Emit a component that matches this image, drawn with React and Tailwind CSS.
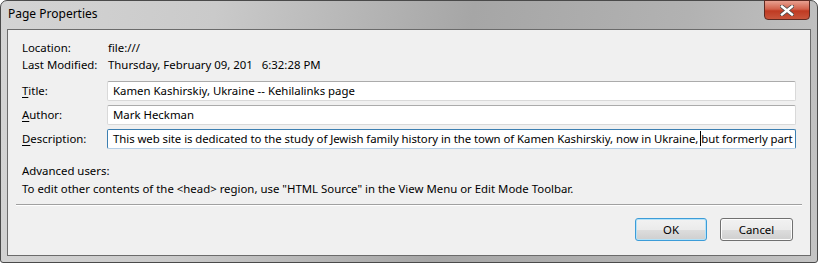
const font = { fontFamily: '"Noto Sans", "Open Sans", sans-serif' };

const Field = ({ underline, rest, value, focused }) => (
  <div className="flex items-center h-[20px]">
    <div className="w-[85px] shrink-0">
      <span className="underline underline-offset-2">{underline}</span>
      {rest}
    </div>
    <div
      className={
        "flex-1 h-[20px] bg-white flex items-center px-[5px] overflow-hidden whitespace-nowrap rounded-[2px] border " +
        (focused
          ? "border-[#3c7fb1] border-b-[#b5cfe7] tracking-[-0.06px]"
          : "border-[#d9d9d9] border-t-[#ababab]")
      }
    >
      <span>{value}</span>
    </div>
  </div>
);

export default function App() {
  return (
    <div
      className="w-[818px] h-[263px] bg-white text-[11.4px] text-black leading-[16px]"
      style={font}
    >
      <div className="relative w-full h-full flex flex-col rounded-t-[7px] rounded-b-[3px] border border-[#4a4a4a] bg-[linear-gradient(100deg,#d4d4d4_0%,#cacaca_25%,#a6a6a6_55%,#b2b2b2_80%,#c4c4c4_100%)]">
        {/* Titelzeile */}
        <div className="h-[28px] shrink-0 flex items-center pl-[7px] pb-[2px] text-[12px]">
          Page Properties
        </div>
        <button className="absolute top-[-1px] right-[7px] w-[46px] h-[20px] rounded-b-[4px] border border-[#5e2a22] bg-[linear-gradient(#e8a090_0%,#d2614b_45%,#bf3a22_55%,#c8553c_100%)] flex items-center justify-center">
          <svg width="14" height="11" viewBox="0 0 14 11">
            <path
              d="M2 1.5 L12 9.5 M12 1.5 L2 9.5"
              stroke="#4a4a4a"
              strokeWidth="4"
              strokeLinecap="square"
            />
            <path
              d="M2 1.5 L12 9.5 M12 1.5 L2 9.5"
              stroke="#ffffff"
              strokeWidth="2.4"
              strokeLinecap="square"
            />
          </svg>
        </button>

        {/* Inhalt */}
        <div className="flex-1 mx-[6px] mb-[6px] border border-[#6b6b6b] bg-[#f0f0f0] flex flex-col pt-[9px]">
          <div className="pl-[14px] pr-[14px]">
            <div className="flex h-[17px] items-center">
              <div className="w-[86px]">Location:</div>
              <div>file:///</div>
            </div>
            <div className="flex h-[17px] items-center">
              <div className="w-[86px]">Last Modified:</div>
              <div>Thursday, February 09, 201&nbsp;&nbsp;&nbsp;6:32:28 PM</div>
            </div>

            <div className="mt-[8px] flex flex-col gap-[4px]">
              <Field
                underline="T"
                rest="itle:"
                value="Kamen Kashirskiy, Ukraine -- Kehilalinks page"
              />
              <Field underline="A" rest="uthor:" value="Mark Heckman" />
              <Field
                underline="D"
                rest="escription:"
                focused
                value={
                  <>
                    This web site is dedicated to the study of Jewish family history in the town of Kamen Kashirskiy, now in Ukraine,{" "}
                    <span className="border-l border-black -ml-[1px]">but formerly part</span>
                  </>
                }
              />
            </div>

            <div className="mt-[13px] h-[18px] flex items-center">Advanced users:</div>
            <div className="h-[18px] flex items-center">
              To edit other contents of the &lt;head&gt; region, use "HTML Source" in the View Menu or Edit Mode Toolbar.
            </div>
          </div>

          <div className="mx-[8px] mt-[6px] border-t border-[#a0a0a0] border-b border-b-white" />

          <div className="flex justify-end gap-[13px] pr-[17px] mt-[12px]">
            <button className="w-[72px] h-[23px] rounded-[3px] border border-[#3c9cd8] bg-[linear-gradient(#f2f2f2_0%,#ebebeb_50%,#dddddd_51%,#cfcfcf_100%)] shadow-[inset_0_0_0_1px_#b4e2f8]">
              OK
            </button>
            <button className="w-[73px] h-[23px] rounded-[3px] border border-[#707070] bg-[linear-gradient(#f2f2f2_0%,#ebebeb_50%,#dddddd_51%,#cfcfcf_100%)] shadow-[inset_0_0_0_1px_#fcfcfc]">
              Cancel
            </button>
          </div>
        </div>
      </div>
    </div>
  );
}
